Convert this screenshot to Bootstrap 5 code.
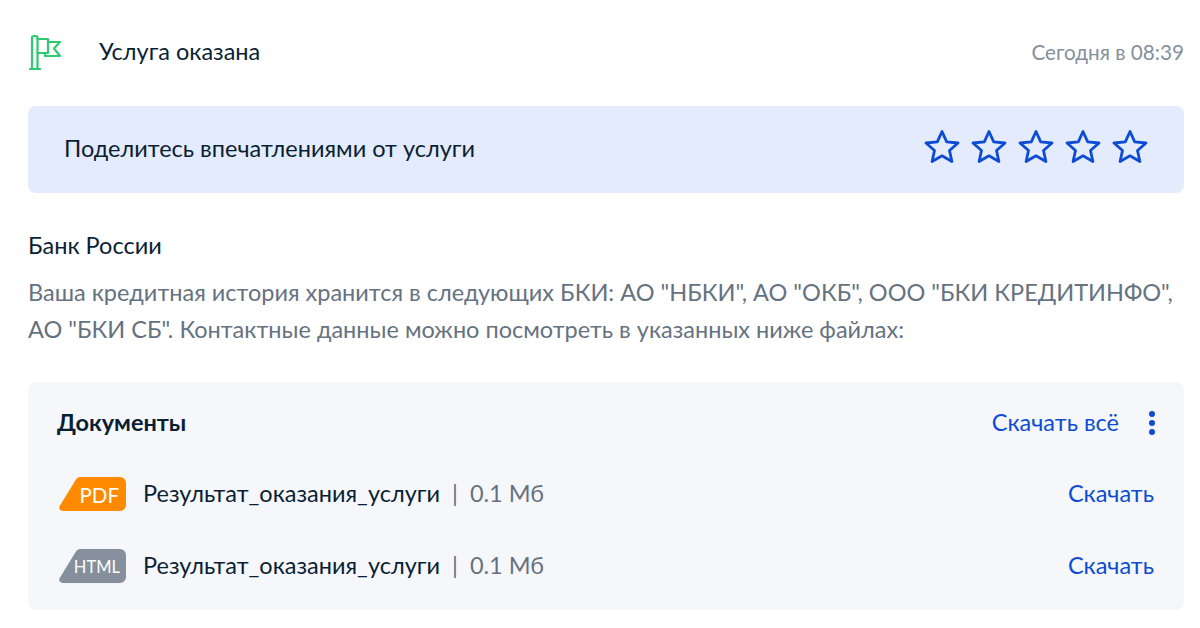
<!DOCTYPE html>
<html lang="ru">
<head>
  <meta charset="UTF-8">
  <title>Услуга оказана</title>
  <link href="https://cdn.jsdelivr.net/npm/bootstrap@5.3.0/dist/css/bootstrap.min.css" rel="stylesheet">
  <style>
    body { font-family: Lato, "Noto Sans", sans-serif; font-size: 23.5px; line-height: 37px; color: #0b1f33; background: #fff; overflow: hidden; }
    .page-wrap { padding: 32px 16px 0 28px; }
    .status-row { height: 38px; }
    .status-icon { width: 71px; }
    .status-time { font-size: 20.7px; color: #86909c; margin-top: 2px; }
    .rate-box { margin-top: 36px; height: 87px; padding: 0 36px; background: #e3ebfc; border-radius: 8px; }
    .rate-text { margin-top: -2px; }
    .stars { gap: 11px; margin-top: -7px; }
    .org-name { margin-top: 34px; line-height: 37px; }
    .info-text { color: #66727f; margin: 10px 0 0; line-height: 37px; white-space: nowrap; }
    .docs-box { margin-top: 34px; height: 228px; padding: 22px 30px 0 29px; background: #f5f7fb; border-radius: 8px; }
    .docs-title { font-weight: 700; }
    .blue-link { color: #0d4cd3; text-decoration: none; }
    .dots { gap: 3px; margin-left: 30px; margin-right: -1px; }
    .dots span { width: 6px; height: 6px; border-radius: 50%; background: #0d4cd3; }
    .doc-row { height: 72px; }
    .doc-first { margin-top: 16px; }
    .file-tag { width: 69px; height: 34px; margin-right: 17px; flex-shrink: 0; margin-top: 1px; }
    .file-tag svg { position: absolute; left: 0; top: 0; }
    .file-tag span { position: absolute; right: 7px; top: 0; line-height: 36px; color: #fff; font-size: 20.500px; }
    .file-tag span.tag-small { font-size: 16.500px; right: 6px; }
    .file-size { color: #66727f; }
    .sep { margin: 0 12px; color: #66727f; }
  </style>
</head>
<body>
  <div class="page-wrap">

    <div class="status-row d-flex align-items-center">
      <div class="status-icon d-flex">
        <svg width="34" height="38" viewBox="0 0 34 38" fill="none" stroke="#2fc96f" stroke-width="2.200" stroke-linejoin="round" stroke-linecap="round">
          <path d="M4 37V5.500a1.500 1.500 0 0 1 1.500-1.500h2.500a1.500 1.500 0 0 1 1.500 1.500V37"/>
          <path d="M2 37h10"/>
          <path d="M9.500 7H20V21H9.500"/>
          <path d="M20 10H32l-6 6.500 6 7.500H17v-3"/>
        </svg>
      </div>
      <div class="flex-grow-1">Услуга оказана</div>
      <div class="status-time">Сегодня в 08:39</div>
    </div>

    <div class="rate-box d-flex align-items-center justify-content-between">
      <div class="rate-text">Поделитесь впечатлениями от услуги</div>
      <div class="stars d-flex">
        <svg width="36" height="34" viewBox="0 0 36 34" fill="none" stroke="#0d4cd3" stroke-width="2.800" stroke-linejoin="round"><path d="M18 2.500l4.700 10.300 11.300 1.200-8.500 7.500 2.400 11-9.900-5.700-9.900 5.700 2.400-11L2 14l11.300-1.200z"/></svg>
        <svg width="36" height="34" viewBox="0 0 36 34" fill="none" stroke="#0d4cd3" stroke-width="2.800" stroke-linejoin="round"><path d="M18 2.500l4.700 10.300 11.300 1.200-8.500 7.500 2.400 11-9.900-5.700-9.900 5.700 2.400-11L2 14l11.300-1.200z"/></svg>
        <svg width="36" height="34" viewBox="0 0 36 34" fill="none" stroke="#0d4cd3" stroke-width="2.800" stroke-linejoin="round"><path d="M18 2.500l4.700 10.300 11.300 1.200-8.500 7.500 2.400 11-9.900-5.700-9.900 5.700 2.400-11L2 14l11.300-1.200z"/></svg>
        <svg width="36" height="34" viewBox="0 0 36 34" fill="none" stroke="#0d4cd3" stroke-width="2.800" stroke-linejoin="round"><path d="M18 2.500l4.700 10.300 11.300 1.200-8.500 7.500 2.400 11-9.900-5.700-9.900 5.700 2.400-11L2 14l11.300-1.200z"/></svg>
        <svg width="36" height="34" viewBox="0 0 36 34" fill="none" stroke="#0d4cd3" stroke-width="2.800" stroke-linejoin="round"><path d="M18 2.500l4.700 10.300 11.300 1.200-8.500 7.500 2.400 11-9.900-5.700-9.900 5.700 2.400-11L2 14l11.300-1.200z"/></svg>
      </div>
    </div>

    <div class="org-name">Банк России</div>
    <p class="info-text">Ваша кредитная история хранится в следующих БКИ: АО "НБКИ", АО "ОКБ", ООО "БКИ КРЕДИТИНФО",<br>АО "БКИ СБ". Контактные данные можно посмотреть в указанных ниже файлах:</p>

    <div class="docs-box">
      <div class="d-flex align-items-center justify-content-between">
        <div class="docs-title">Документы</div>
        <div class="d-flex align-items-center">
          <a href="#" class="blue-link">Скачать всё</a>
          <div class="dots d-flex flex-column"><span></span><span></span><span></span></div>
        </div>
      </div>
      <div class="doc-row doc-first d-flex align-items-center">
        <div class="file-tag position-relative">
          <svg width="69" height="34" viewBox="0 0 69 34"><path d="M23 0H63a6 6 0 0 1 6 6V28a6 6 0 0 1-6 6H7C3 34 1 31.500 3 28.500L18 4C20 1 21 0 23 0z" fill="#ff8a00"/></svg>
          <span>PDF</span>
        </div>
        <div>Результат_оказания_услуги</div>
        <div class="sep">|</div>
        <div class="file-size flex-grow-1">0.1 Мб</div>
        <a href="#" class="blue-link">Скачать</a>
      </div>
      <div class="doc-row d-flex align-items-center">
        <div class="file-tag position-relative">
          <svg width="69" height="34" viewBox="0 0 69 34"><path d="M23 0H63a6 6 0 0 1 6 6V28a6 6 0 0 1-6 6H7C3 34 1 31.500 3 28.500L18 4C20 1 21 0 23 0z" fill="#86909c"/></svg>
          <span class="tag-small">HTML</span>
        </div>
        <div>Результат_оказания_услуги</div>
        <div class="sep">|</div>
        <div class="file-size flex-grow-1">0.1 Мб</div>
        <a href="#" class="blue-link">Скачать</a>
      </div>
    </div>

  </div>
  <script src="https://cdn.jsdelivr.net/npm/bootstrap@5.3.0/dist/js/bootstrap.bundle.min.js"></script>
</body>
</html>
